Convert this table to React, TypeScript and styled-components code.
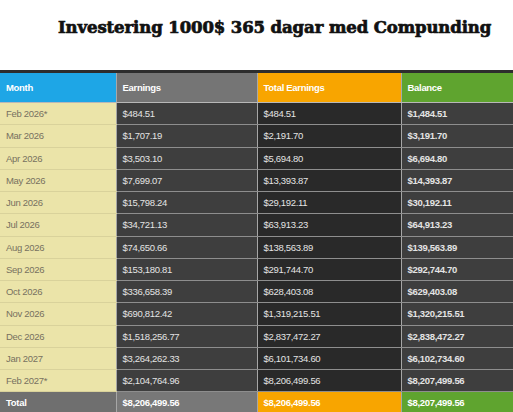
import React from 'react';
import styled, { createGlobalStyle } from 'styled-components';

const GlobalStyle = createGlobalStyle`
  body {
    margin: 0;
    background: #ffffff;
    font-family: "Liberation Sans", Arial, sans-serif;
  }
`;

type Col = 'month' | 'earn' | 'total' | 'bal';

const headBg: Record<Col, string> = {
  month: '#1ea6e6',
  earn: '#757575',
  total: '#f8a500',
  bal: '#5fa42f',
};

const cellBg: Record<Col, string> = {
  month: '#ebe4a9',
  earn: '#3e3e3e',
  total: '#292929',
  bal: '#3e3e3e',
};

const footBg: Record<Col, string> = {
  month: '#6f6f6f',
  earn: '#787878',
  total: '#f8a500',
  bal: '#5fa42f',
};

const Page = styled.div`
  width: 513px;
  height: 412px;
  overflow: hidden;
`;

const Title = styled.h1`
  margin: 0;
  padding: 18px 0 0 58px;
  height: 70px;
  box-sizing: border-box;
  font-family: "DejaVu Serif", "Liberation Serif", serif;
  font-weight: 900;
  font-size: 16.5px;
  letter-spacing: -0.1px;
  -webkit-text-stroke: 0.7px #111;
  color: #111;
  white-space: nowrap;
`;

const Table = styled.table`
  width: 100%;
  border-collapse: collapse;
  table-layout: fixed;
  border-top: 3px solid #2d2d2d;
  font-size: 9.5px;
  letter-spacing: -0.3px;
`;

const Head = styled.th<{ $col: Col }>`
  height: 29px;
  padding: 0 0 0 6px;
  text-align: left;
  font-weight: bold;
  color: #fff;
  background: ${({ $col }) => headBg[$col]};
  border-left: ${({ $col }) => ($col === 'month' ? 'none' : '1px solid #a8a8a8')};
  border-bottom: 1px solid #b8b8b8;
`;

const Cell = styled.td<{ $col: Col }>`
  height: 21.25px;
  padding: 0 0 0 6px;
  white-space: nowrap;
  background: ${({ $col }) => cellBg[$col]};
  color: ${({ $col }) => ($col === 'month' ? '#777160' : '#e4e4e4')};
  font-weight: ${({ $col }) => ($col === 'bal' ? 'bold' : 'normal')};
  border-left: ${({ $col }) => ($col === 'month' ? 'none' : '1px solid #a6a6a6')};
  border-bottom: 1px solid ${({ $col }) => ($col === 'month' ? '#d9d29b' : '#8e8e8e')};
`;

const Foot = styled.td<{ $col: Col }>`
  height: 21px;
  padding: 0 0 0 6px;
  white-space: nowrap;
  font-weight: bold;
  color: #fff;
  background: ${({ $col }) => footBg[$col]};
  border-left: ${({ $col }) => ($col === 'month' ? 'none' : '1px solid #a6a6a6')};
`;

const rows = [
  ['Feb 2026*', '$484.51', '$484.51', '$1,484.51'],
  ['Mar 2026', '$1,707.19', '$2,191.70', '$3,191.70'],
  ['Apr 2026', '$3,503.10', '$5,694.80', '$6,694.80'],
  ['May 2026', '$7,699.07', '$13,393.87', '$14,393.87'],
  ['Jun 2026', '$15,798.24', '$29,192.11', '$30,192.11'],
  ['Jul 2026', '$34,721.13', '$63,913.23', '$64,913.23'],
  ['Aug 2026', '$74,650.66', '$138,563.89', '$139,563.89'],
  ['Sep 2026', '$153,180.81', '$291,744.70', '$292,744.70'],
  ['Oct 2026', '$336,658.39', '$628,403.08', '$629,403.08'],
  ['Nov 2026', '$690,812.42', '$1,319,215.51', '$1,320,215.51'],
  ['Dec 2026', '$1,518,256.77', '$2,837,472.27', '$2,838,472.27'],
  ['Jan 2027', '$3,264,262.33', '$6,101,734.60', '$6,102,734.60'],
  ['Feb 2027*', '$2,104,764.96', '$8,206,499.56', '$8,207,499.56'],
];

const cols: Col[] = ['month', 'earn', 'total', 'bal'];

const App: React.FC = () => {
  return (
    <Page>
      <GlobalStyle />
      <Title>Investering 1000$ 365 dagar med Compunding</Title>
      <Table>
        <colgroup>
          <col style={{ width: 116 }} />
          <col style={{ width: 141 }} />
          <col style={{ width: 144 }} />
          <col />
        </colgroup>
        <thead>
          <tr>
            <Head $col="month">Month</Head>
            <Head $col="earn">Earnings</Head>
            <Head $col="total">Total Earnings</Head>
            <Head $col="bal">Balance</Head>
          </tr>
        </thead>
        <tbody>
          {rows.map((r) => (
            <tr key={r[0]}>
              {r.map((v, i) => (
                <Cell key={i} $col={cols[i]}>{v}</Cell>
              ))}
            </tr>
          ))}
        </tbody>
        <tfoot>
          <tr>
            <Foot $col="month">Total</Foot>
            <Foot $col="earn">$8,206,499.56</Foot>
            <Foot $col="total">$8,206,499.56</Foot>
            <Foot $col="bal">$8,207,499.56</Foot>
          </tr>
        </tfoot>
      </Table>
    </Page>
  );
};

export default App;
